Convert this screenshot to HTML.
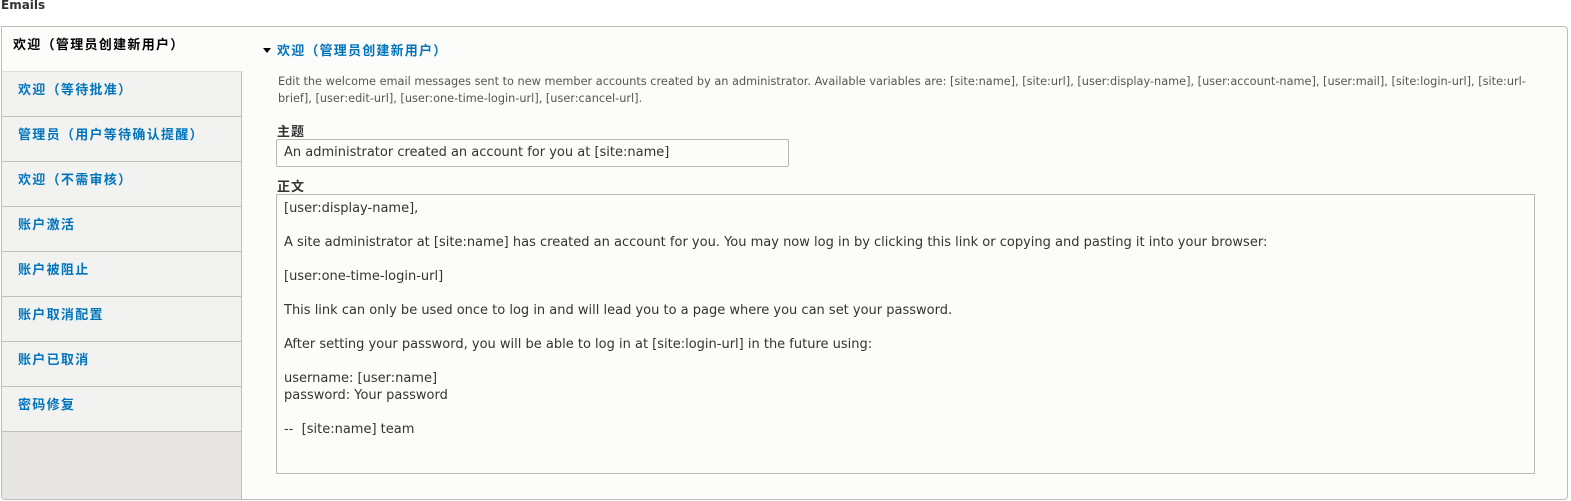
<!DOCTYPE html>
<html><head><meta charset="utf-8"><style>
*{box-sizing:border-box;margin:0;padding:0}
body{width:1571px;height:501px;background:#fff;font-family:"DejaVu Sans","Noto Sans CJK SC",sans-serif;color:#333;position:relative;overflow:hidden}
.h{position:absolute;left:1px;top:-2px;font-size:12px;font-weight:bold;color:#333}
.box{position:absolute;left:1px;top:26px;width:1567px;height:474px;border:1px solid #bfbfba;border-radius:0 4px 4px 4px;background:#fcfcfa;overflow:hidden}
.side{position:absolute;left:0;top:0;width:240px;height:472px;background:#e8e6e3;border-right:1px solid #bfbfba}
.tab{height:45px;border-bottom:1px solid #c0c0bc;background:#f2f2f0;padding:7px 0 0 16px;font-size:13px;letter-spacing:1.3px;font-weight:bold;color:#0074bd}
.tab.a{background:#fcfcfa;color:#000;padding-left:11px;width:241px;border-bottom:1px solid #ddd;height:45px;padding-top:7px}
.main{position:absolute;left:240px;top:0;right:0;bottom:0}
.sum{position:absolute;left:21px;top:13px;font-size:13px;letter-spacing:1.2px;font-weight:bold;color:#0074bd}
.sum:before{content:"";display:inline-block;border-left:4px solid transparent;border-right:4px solid transparent;border-top:5px solid #000;margin-right:6px;vertical-align:2px}
.desc{position:absolute;left:36px;top:46px;width:1255px;font-size:11.3px;line-height:17px;color:#555}
.lab{position:absolute;left:35px;font-size:13px;letter-spacing:1px;font-weight:bold;color:#333}
.inp{position:absolute;left:34px;top:112px;width:513px;height:28px;border:1px solid #b8b8b8;border-radius:2px;background:#fcfcfa;font-size:13px;padding:5px 7px;color:#333}
.ta{position:absolute;left:34px;top:167px;width:1259px;height:280px;border:1px solid #b8b8b8;background:#fcfcfa;font-size:13px;line-height:17px;padding:5px 7px;white-space:pre;color:#333}
</style></head><body>
<div class="h">Emails</div>
<div class="box">
<div class="side">
<div class="tab a">欢迎（管理员创建新用户）</div>
<div class="tab">欢迎（等待批准）</div>
<div class="tab">管理员（用户等待确认提醒）</div>
<div class="tab">欢迎（不需审核）</div>
<div class="tab">账户激活</div>
<div class="tab">账户被阻止</div>
<div class="tab">账户取消配置</div>
<div class="tab">账户已取消</div>
<div class="tab">密码修复</div>
</div>
<div class="main">
<div class="sum">欢迎（管理员创建新用户）</div>
<div class="desc">Edit the welcome email messages sent to new member accounts created by an administrator. Available variables are: [site:name], [site:url], [user:display-name], [user:account-name], [user:mail], [site:login-url], [site:url-brief], [user:edit-url], [user:one-time-login-url], [user:cancel-url].</div>
<div class="lab" style="top:94px">主题</div>
<div class="inp">An administrator created an account for you at [site:name]</div>
<div class="lab" style="top:149px">正文</div>
<div class="ta">[user:display-name],

A site administrator at [site:name] has created an account for you. You may now log in by clicking this link or copying and pasting it into your browser:

[user:one-time-login-url]

This link can only be used once to log in and will lead you to a page where you can set your password.

After setting your password, you will be able to log in at [site:login-url] in the future using:

username: [user:name]
password: Your password

--  [site:name] team</div>
</div>
</div>
</body></html>
